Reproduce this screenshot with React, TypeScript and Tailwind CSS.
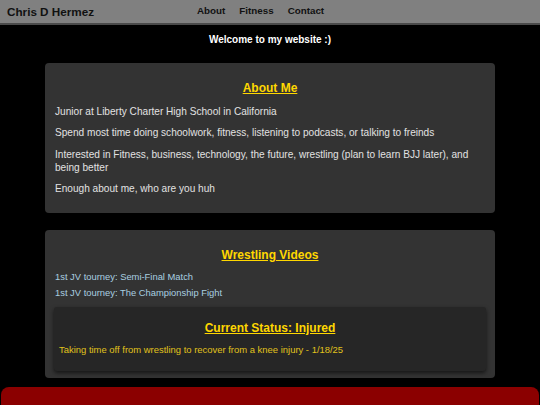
import React from "react";

export default function App() {
  return (
    <div className="min-h-[405px] w-full bg-black font-['Liberation_Sans',Arial,sans-serif] overflow-hidden">
      <header className="h-[25px] bg-[#808080] border-b-2 border-[#4a4a4a] flex items-center px-[7px]">
        <span className="font-bold text-[11.7px] text-[#111]">Chris D Hermez</span>
        <nav className="flex gap-[14px] ml-[103px] text-[9.8px] font-bold text-[#111]">
          <a>About</a>
          <a>Fitness</a>
          <a>Contact</a>
        </nav>
      </header>

      <p className="text-center text-white font-bold text-[10px] leading-[12px] mt-[9px]">
        Welcome to my website :)
      </p>

      <section className="mx-[45px] mt-[17px] bg-[#333] rounded-[4px] px-[10px] pt-[17px] pb-[18.5px] text-[10.1px] leading-[13px] text-[#e2e2e2]">
        <h2 className="text-center font-bold text-[12px] leading-[16px] text-[#ffd700] underline mb-[8.5px]">About Me</h2>
        <p className="mb-[8.5px]">Junior at Liberty Charter High School in California</p>
        <p className="mb-[8.5px]">
          Spend most time doing schoolwork, fitness, listening to podcasts, or talking to freinds
        </p>
        <p className="mb-[8px]">
          Interested in Fitness, business, technology, the future, wrestling (plan to learn BJJ later), and being better
        </p>
        <p>Enough about me, who are you huh</p>
      </section>

      <section className="mx-[45px] mt-[17px] bg-[#333] rounded-[4px] px-[9px] pt-[17px] pb-[7px] text-[9.4px] leading-[12px]">
        <h2 className="text-center font-bold text-[12px] leading-[16px] text-[#ffd700] underline mb-[8px]">Wrestling Videos</h2>
        <a className="block px-[1px] text-[#a9cfe0] mb-[4px]">1st JV tourney: Semi-Final Match</a>
        <a className="block px-[1px] text-[#a9cfe0]">1st JV tourney: The Championship Fight</a>
        <div className="mt-[8px] bg-[#262626] rounded-[3px] shadow-[0_2px_4px_rgba(0,0,0,0.6)] px-[5px] pt-[13px] pb-[15px]">
          <h3 className="text-center font-bold text-[12px] leading-[16px] text-[#ffd700] underline mb-[8px]">
            Current Status: Injured
          </h3>
          <p className="text-[#e0c21c] text-[9.45px] leading-[12px]">
            Taking time off from wrestling to recover from a knee injury - 1/18/25
          </p>
        </div>
      </section>

      <footer className="mt-[9px] mx-[1px] h-[30px] bg-[#8b0000] rounded-t-[8px]"></footer>
    </div>
  );
}
